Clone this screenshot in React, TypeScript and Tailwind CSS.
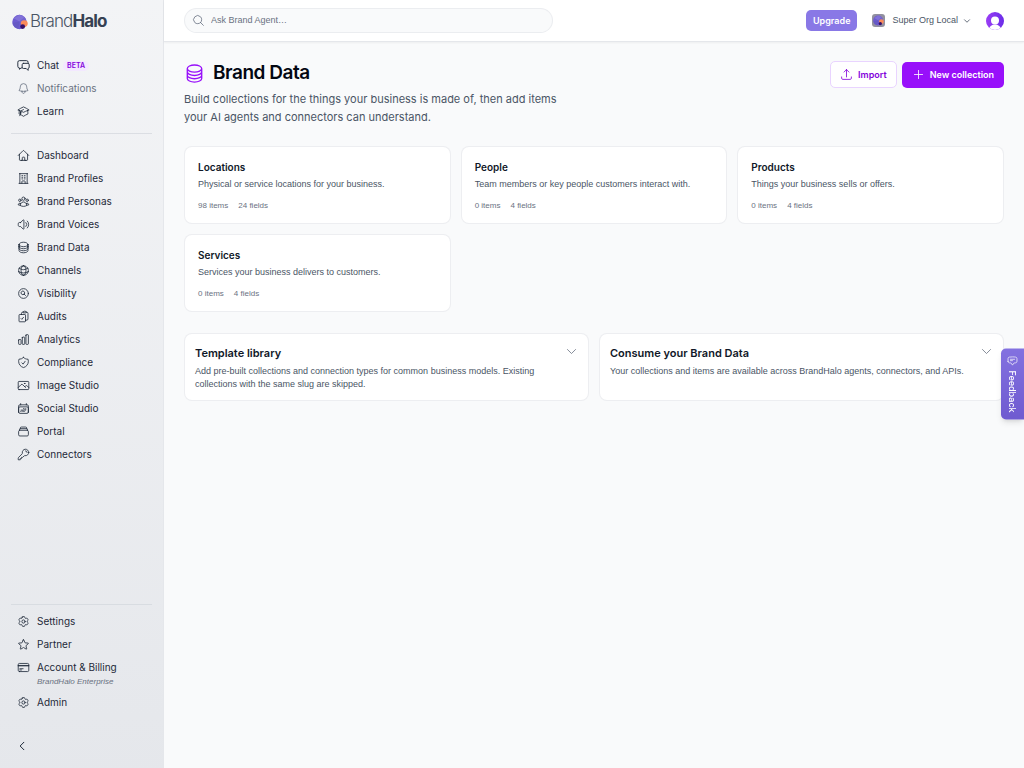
import type { ComponentType, ReactNode } from 'react';
import {
  HiOutlineAcademicCap,
  HiOutlineArrowUpTray,
  HiOutlineBell,
  HiOutlineBuildingOffice,
  HiOutlineCalendarDateRange,
  HiOutlineChartBar,
  HiOutlineChatBubbleBottomCenterText,
  HiOutlineChevronDown,
  HiOutlineChevronLeft,
  HiOutlineCircleStack,
  HiOutlineClipboardDocumentCheck,
  HiOutlineCog6Tooth,
  HiOutlineCreditCard,
  HiOutlineGlobeAlt,
  HiOutlineHome,
  HiOutlineKey,
  HiOutlineMagnifyingGlass,
  HiOutlineMagnifyingGlassCircle,
  HiOutlinePhoto,
  HiOutlinePlus,
  HiOutlineRectangleStack,
  HiOutlineShieldCheck,
  HiOutlineSpeakerWave,
  HiOutlineStar,
  HiOutlineUserGroup,
} from 'react-icons/hi2';

type Icon = ComponentType<{ className?: string }>;

interface NavItem {
  label: string;
  icon: Icon;
  badge?: string;
  note?: string;
  muted?: boolean;
}

function ChatIcon({ className }: { className?: string }) {
  return (
    <svg
      className={className}
      viewBox="0 0 24 24"
      fill="none"
      stroke="currentColor"
      strokeWidth="1.75"
      strokeLinecap="round"
      strokeLinejoin="round"
      aria-hidden="true"
    >
      <path d="M9 16.500H7.500L4.500 19v-2.500A3 3 0 0 1 1.500 13.500V6a3 3 0 0 1 3-3h13a3 3 0 0 1 3 3v2" />
      <path d="M12 8h8a2.500 2.500 0 0 1 2.500 2.500V15a2.500 2.500 0 0 1-2 2.500V21L17 17.500h-5A2.500 2.500 0 0 1 9.500 15v-4.500A2.500 2.500 0 0 1 12 8Z" />
    </svg>
  );
}

const TOP_NAV: NavItem[] = [
  { label: 'Chat', icon: ChatIcon, badge: 'BETA' },
  { label: 'Notifications', icon: HiOutlineBell, muted: true },
  { label: 'Learn', icon: HiOutlineAcademicCap },
];

const MAIN_NAV: NavItem[] = [
  { label: 'Dashboard', icon: HiOutlineHome },
  { label: 'Brand Profiles', icon: HiOutlineBuildingOffice },
  { label: 'Brand Personas', icon: HiOutlineUserGroup },
  { label: 'Brand Voices', icon: HiOutlineSpeakerWave },
  { label: 'Brand Data', icon: HiOutlineCircleStack },
  { label: 'Channels', icon: HiOutlineGlobeAlt },
  { label: 'Visibility', icon: HiOutlineMagnifyingGlassCircle },
  { label: 'Audits', icon: HiOutlineClipboardDocumentCheck },
  { label: 'Analytics', icon: HiOutlineChartBar },
  { label: 'Compliance', icon: HiOutlineShieldCheck },
  { label: 'Image Studio', icon: HiOutlinePhoto },
  { label: 'Social Studio', icon: HiOutlineCalendarDateRange },
  { label: 'Portal', icon: HiOutlineRectangleStack },
  { label: 'Connectors', icon: HiOutlineKey },
];

const BOTTOM_NAV: NavItem[] = [
  { label: 'Settings', icon: HiOutlineCog6Tooth },
  { label: 'Partner', icon: HiOutlineStar },
  { label: 'Account & Billing', icon: HiOutlineCreditCard, note: 'BrandHalo Enterprise' },
  { label: 'Admin', icon: HiOutlineCog6Tooth },
];

const COLLECTIONS = [
  { name: 'Locations', description: 'Physical or service locations for your business.', items: 98, fields: 24 },
  { name: 'People', description: 'Team members or key people customers interact with.', items: 0, fields: 4 },
  { name: 'Products', description: 'Things your business sells or offers.', items: 0, fields: 4 },
  { name: 'Services', description: 'Services your business delivers to customers.', items: 0, fields: 4 },
];

function HaloMark({ className }: { className?: string }) {
  return (
    <svg className={className} viewBox="0 0 30 30" aria-hidden="true">
      <circle cx="14" cy="15" r="13.500" fill="#6d5bd0" />
      <path d="M3 8 14 1.500 24 6 14 14Z" fill="#8172d8" />
      <path d="M1 17 14 14 12 28 5 25Z" fill="#6659c4" />
      <path d="m14 14 10-8 3 7-9 5Z" fill="#7465cf" />
      <circle cx="23" cy="18" r="6.500" fill="#fb8a5b" />
      <circle cx="20" cy="23.500" r="4.500" fill="#35106b" />
    </svg>
  );
}

function NavList({ items }: { items: NavItem[] }) {
  return (
    <ul>
      {items.map(({ label, icon: ItemIcon, badge, note, muted }) => (
        <li key={label}>
          <a
            href="#"
            className={`flex h-[23px] items-center gap-[7px] pl-[17px] text-[10px] ${muted ? 'text-gray-500' : 'text-gray-800'}`}
          >
            <ItemIcon className="size-[13px] shrink-0" />
            <span className="flex items-center gap-1">
              {label}
              {badge && (
                <span className="rounded-full bg-purple-100 px-1 text-[7px] leading-[10px] font-semibold text-purple-700">
                  {badge}
                </span>
              )}
            </span>
          </a>
          {note && (
            <p className="-mt-1 h-4 pl-[37px] font-['Liberation_Sans',sans-serif] text-[8px] leading-[14px] text-gray-500 italic">
              {note}
            </p>
          )}
        </li>
      ))}
    </ul>
  );
}

function Sidebar() {
  return (
    <aside className="flex w-[164px] shrink-0 flex-col border-r border-gray-200 bg-linear-to-b from-gray-100 to-gray-200">
      <a href="#" className="flex h-11 items-center pl-3 text-[17px] tracking-tighter text-gray-600">
        <HaloMark className="mr-[2px] size-4" />
        <span className="font-light">Brand</span>
        <span className="font-bold text-gray-700">Halo</span>
      </a>
      <nav className="flex flex-1 flex-col pt-[10px]">
        <NavList items={TOP_NAV} />
        <hr className="mx-[11px] my-[10px] border-gray-300/70" />
        <NavList items={MAIN_NAV} />
        <div className="mt-auto">
          <hr className="mx-[11px] mb-[5px] border-gray-300/70" />
          <NavList items={BOTTOM_NAV} />
        </div>
      </nav>
      <div className="flex h-[54px] items-center pt-[10px] pl-4">
        <button type="button" aria-label="Collapse sidebar" className="text-gray-800">
          <HiOutlineChevronLeft className="size-3" strokeWidth={2} />
        </button>
      </div>
    </aside>
  );
}

function Header() {
  return (
    <header className="flex h-[42px] shrink-0 items-center justify-between border-b border-gray-200 bg-white px-5 font-['Liberation_Sans',sans-serif] shadow-xs">
      <label className="flex h-[25px] w-[45%] items-center gap-[6px] rounded-full border border-gray-200/70 bg-gray-50 px-[7px]">
        <HiOutlineMagnifyingGlass className="size-[13px] text-gray-500" />
        <input
          type="search"
          aria-label="Ask Brand Agent"
          placeholder="Ask Brand Agent…"
          className="min-w-0 flex-1 bg-transparent text-[9px] outline-none placeholder:text-gray-500"
        />
      </label>
      <div className="flex items-center gap-[15px]">
        <button
          type="button"
          className="h-[21px] rounded-[5px] bg-[#8978e6] px-[7px] font-['Inter',sans-serif] text-[9px] font-semibold text-white"
        >
          Upgrade
        </button>
        <button type="button" className="flex items-center text-[9px] text-gray-600">
          <span className="mr-[7px] flex size-[13px] items-center justify-center rounded-[3px] bg-[#92909f]">
            <HaloMark className="size-[11px]" />
          </span>
          Super Org Local
          <HiOutlineChevronDown className="ml-[5px] size-2" strokeWidth={2.5} />
        </button>
        <button type="button" aria-label="Your account">
          <svg className="size-[18px]" viewBox="0 0 18 18" aria-hidden="true">
            <defs>
              <linearGradient id="avatar" x1="0" x2="1" y1="0" y2="0">
                <stop stopColor="#9a3df5" />
                <stop offset="1" stopColor="#6b2de8" />
              </linearGradient>
              <clipPath id="avatar-clip">
                <circle cx="9" cy="9" r="9" />
              </clipPath>
            </defs>
            <g clipPath="url(#avatar-clip)">
              <rect width="18" height="18" fill="url(#avatar)" />
              <circle cx="9" cy="8.500" r="4" fill="#fff" />
              <ellipse cx="9" cy="17.500" rx="6" ry="5" fill="#fff" />
            </g>
          </svg>
        </button>
      </div>
    </header>
  );
}

function InfoPanel({ title, children }: { title: string; children: ReactNode }) {
  return (
    <section className="rounded-lg border border-gray-200/70 bg-white px-[10px] pt-[11px] pb-[9px]">
      <div className="flex items-start justify-between">
        <h2 className="text-[11px] leading-4 font-semibold text-gray-900">{title}</h2>
        <button type="button" aria-label={`Expand ${title}`} className="text-gray-500">
          <HiOutlineChevronDown className="size-[13px]" />
        </button>
      </div>
      <p className="mt-1 pr-6 font-['Liberation_Sans',sans-serif] text-[9px] leading-[13px] text-gray-600">
        {children}
      </p>
    </section>
  );
}

export default function App() {
  return (
    <div className="flex min-h-screen bg-gray-50 font-['Inter',sans-serif] text-gray-900">
      <Sidebar />
      <div className="flex min-w-0 flex-1 flex-col">
        <Header />
        <main className="px-5 pt-[19px]">
          <div className="flex items-start justify-between">
            <div>
              <h1 className="flex h-6 items-center gap-2 text-[19px] font-semibold tracking-tight text-gray-950">
                <HiOutlineCircleStack className="size-[21px] text-purple-600" />
                Brand Data
              </h1>
              <p className="mt-[5px] max-w-96 text-[11px] leading-[18px] text-gray-600">
                Build collections for the things your business is made of, then add items your AI agents and connectors
                can understand.
              </p>
            </div>
            <div className="flex items-center gap-[5px] text-[9px] font-semibold">
              <button
                type="button"
                className="flex h-[27px] items-center gap-[5px] rounded-[5px] border border-purple-200 bg-white px-[9px] text-purple-700"
              >
                <HiOutlineArrowUpTray className="size-[13px]" />
                Import
              </button>
              <button
                type="button"
                className="flex h-[26px] items-center gap-[5px] rounded-[5px] bg-purple-600 px-[10px] text-white"
              >
                <HiOutlinePlus className="size-[13px]" />
                New collection
              </button>
            </div>
          </div>

          <div className="mt-5 grid grid-cols-3 gap-[10px]">
            {COLLECTIONS.map((collection) => (
              <a
                key={collection.name}
                href="#"
                className="rounded-lg border border-gray-200/70 bg-white px-[13px] pt-3 pb-[11px]"
              >
                <h2 className="text-[10px] leading-4 font-semibold">{collection.name}</h2>
                <div className="font-['Liberation_Sans',sans-serif]">
                  <p className="mt-[3px] text-[9px] leading-[13px] text-gray-600">{collection.description}</p>
                  <p className="mt-[9px] flex gap-[10px] text-[8px] leading-3 text-gray-500">
                    <span>{collection.items} items</span>
                    <span>{collection.fields} fields</span>
                  </p>
                </div>
              </a>
            ))}
          </div>

          <div className="mt-[21px] grid grid-cols-2 gap-[10px]">
            <InfoPanel title="Template library">
              Add pre-built collections and connection types for common business models. Existing collections with the
              same slug are skipped.
            </InfoPanel>
            <InfoPanel title="Consume your Brand Data">
              Your collections and items are available across BrandHalo agents, connectors, and APIs.
            </InfoPanel>
          </div>
        </main>
      </div>

      <button
        type="button"
        className="fixed top-1/2 right-0 flex h-[71px] w-[23px] -translate-y-1/2 items-center justify-center gap-1 rounded-l-[5px] bg-linear-to-b from-[#8371e0] to-[#6f5bd0] text-[9px] font-medium text-white shadow-md [writing-mode:vertical-rl]"
      >
        <HiOutlineChatBubbleBottomCenterText className="size-[11px]" />
        Feedback
      </button>
    </div>
  );
}
